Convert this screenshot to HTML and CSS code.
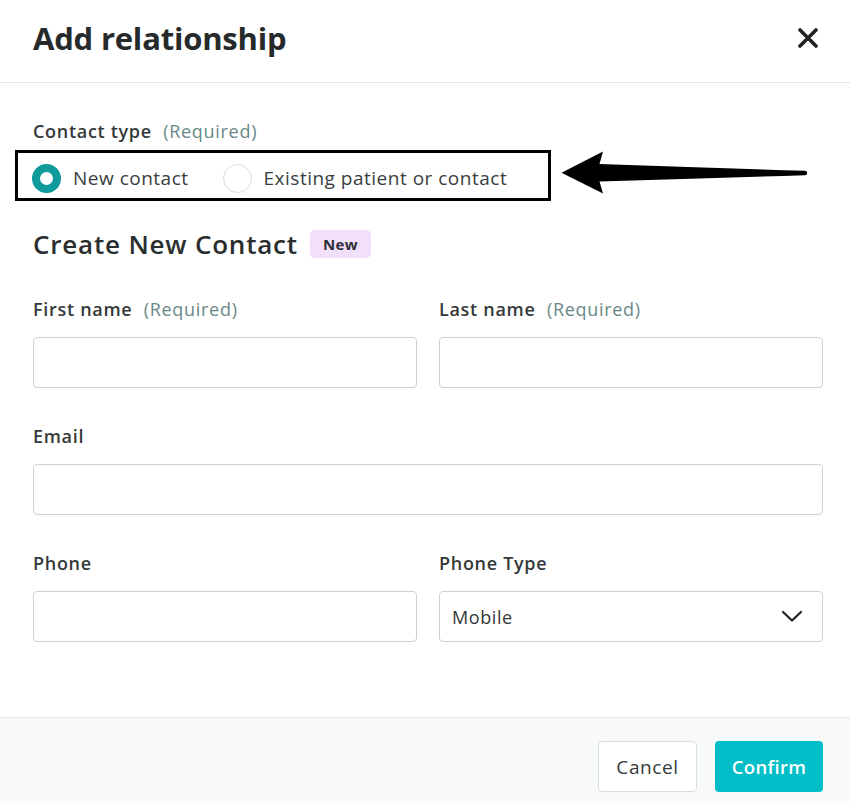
FILE: index.html
```html
<!DOCTYPE html>
<html>
<head>
<meta charset="utf-8">
<link rel="stylesheet" href="styles.css">
</head>
<body>
<div class="modal">
  <header class="modal-header">
    <h1 class="title">Add relationship</h1>
    <svg class="close" width="20" height="20" viewBox="0 0 20 20"><path d="M2 2 L18 18 M18 2 L2 18" stroke="#222" stroke-width="3.6" stroke-linecap="round"/></svg>
  </header>
  <main class="modal-body">
    <div class="label label-first">Contact type <span class="req">(Required)</span></div>
    <div class="radio-box">
      <label class="radio-item"><span class="radio checked"></span><span>New contact</span></label>
      <label class="radio-item second"><span class="radio"></span><span>Existing patient or contact</span></label>
    </div>
    <div class="section-head"><h2>Create New Contact</h2><span class="badge">New</span></div>
    <div class="grid">
      <div class="field">
        <div class="label">First name <span class="req">(Required)</span></div>
        <div class="input"></div>
      </div>
      <div class="field">
        <div class="label">Last name <span class="req">(Required)</span></div>
        <div class="input"></div>
      </div>
      <div class="field full">
        <div class="label">Email</div>
        <div class="input"></div>
      </div>
      <div class="field">
        <div class="label">Phone</div>
        <div class="input"></div>
      </div>
      <div class="field">
        <div class="label">Phone Type</div>
        <div class="input select"><span>Mobile</span>
          <svg width="22" height="14" viewBox="0 0 22 14"><path d="M2 3 L11 11.5 L20 3" fill="none" stroke="#222" stroke-width="2.2" stroke-linecap="round" stroke-linejoin="round"/></svg>
        </div>
      </div>
    </div>
  </main>
  <footer class="modal-footer">
    <button class="btn cancel">Cancel</button>
    <button class="btn confirm">Confirm</button>
  </footer>
</div>
<svg class="arrow" width="260" height="56" viewBox="555 145 260 56"><path d="M561.5 172.8 L603 151.5 L599.5 164 Q700 167.5 805 170.8 A2.2 2.2 0 0 1 805 175.2 Q700 178.5 599.5 181.5 L603 193.5 Z" fill="#000"/></svg>
</body>
</html>
```
FILE: styles.css
```css
* { box-sizing: border-box; }
html, body { margin: 0; padding: 0; }
body {
  font-family: "Open Sans", "Liberation Sans", sans-serif;
  color: #2e3232;
  background: #fff;
  width: 850px;
  height: 803px;
  overflow: hidden;
  position: relative;
}
.modal {
  display: flex;
  flex-direction: column;
  height: 803px;
}
.modal-header {
  height: 83px;
  border-bottom: 1px solid #e1e7e7;
  display: flex;
  align-items: center;
  justify-content: space-between;
  padding: 0 32px 6px 33px;
}
.title {
  margin: 0;
  font-size: 31px;
  font-weight: 700;
  color: #262a2a;
  letter-spacing: -0.2px;
}
.close { display: block; }
.modal-body {
  flex: 1;
  padding: 0 27px 0 33px;
}
.label {
  font-size: 18px;
  line-height: 18px;
  font-weight: 600;
  color: #353939;
  letter-spacing: 0.7px;
}
.label-first { margin-top: 39px; }
.req {
  font-weight: 400;
  color: #6a8888;
  margin-left: 6px;
}
.radio-box {
  margin: 10px 0 0 -18px;
  width: 536px;
  height: 51px;
  border: 3px solid #000;
  display: flex;
  align-items: center;
  padding: 5px 0 0 14px;
}
.radio-item {
  display: flex;
  align-items: center;
  gap: 12px;
  font-size: 19px;
  letter-spacing: 0.5px;
  color: #3a3e3e;
}
.radio-item.second { margin-left: 34px; }
.radio {
  width: 29px;
  height: 29px;
  border-radius: 50%;
  border: 1.5px solid #d3dcdc;
  background: #fff;
  flex: none;
}
.radio.checked {
  border: 8.5px solid #0f9a9c;
}
.section-head {
  margin-top: 28px;
  display: flex;
  align-items: center;
  gap: 12px;
  height: 30px;
}
.section-head h2 {
  margin: 0;
  font-size: 26px;
  font-weight: 600;
  letter-spacing: 0.8px;
  color: #2a2e2e;
}
.badge {
  background: #f1dffc;
  border-radius: 5px;
  width: 61px;
  height: 28px;
  display: flex;
  align-items: center;
  justify-content: center;
  font-size: 15px;
  letter-spacing: 0.3px;
  font-weight: 700;
  color: #2e2e36;
}
.grid {
  margin-top: 41px;
  display: grid;
  grid-template-columns: 1fr 1fr;
  column-gap: 22px;
  row-gap: 39px;
}
.field.full { grid-column: 1 / 3; }
.input {
  margin-top: 19px;
  height: 51px;
  border: 1px solid #cad4d4;
  border-radius: 4px;
  background: #fff;
}
.select {
  display: flex;
  align-items: center;
  justify-content: space-between;
  padding: 0 19px 0 12px;
  font-size: 18px;
  letter-spacing: 0.6px;
  color: #333737;
}
.select svg { display: block; margin-top: -2px; }
.modal-footer {
  height: 86px;
  border-top: 1px solid #e3e7e7;
  background: #f8f9f9;
  display: flex;
  justify-content: flex-end;
  align-items: flex-start;
  gap: 18px;
  padding: 23px 27px 0 0;
}
.btn {
  height: 51px;
  border-radius: 4px;
  font-family: "Open Sans", "Liberation Sans", sans-serif;
  padding: 0;
}
.cancel {
  width: 99px;
  background: #fff;
  border: 1px solid #d7dede;
  color: #363a3a;
  font-size: 19px;
  letter-spacing: 0.6px;
}
.confirm {
  width: 108px;
  background: #00bec8;
  border: none;
  color: #fff;
  font-weight: 600;
  font-size: 18.5px;
  letter-spacing: 0.3px;
}
.arrow {
  position: absolute;
  left: 555px;
  top: 145px;
}
```
